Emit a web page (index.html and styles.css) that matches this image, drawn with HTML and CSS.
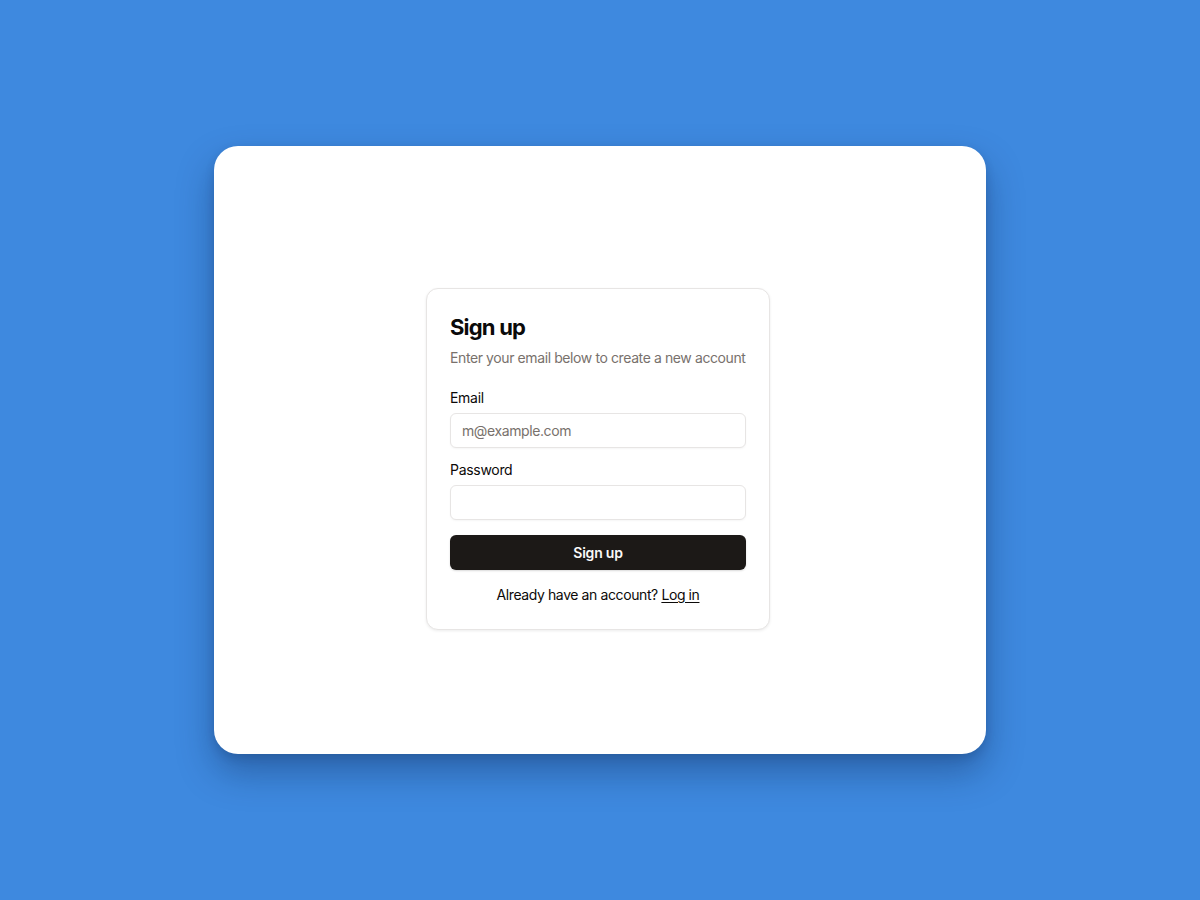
FILE: index.html
```html
<!DOCTYPE html>
<html lang="en">
<head>
<meta charset="utf-8">
<title>Sign up</title>
<link rel="stylesheet" href="styles.css">
</head>
<body>
<div class="stage">
  <div class="window">
    <form class="card">
      <h1 class="title">Sign up</h1>
      <p class="subtitle">Enter your email below to create a new account</p>
      <label class="label" for="email">Email</label>
      <input class="input" id="email" type="email" placeholder="m@example.com">
      <label class="label label-gap" for="password">Password</label>
      <input class="input" id="password" type="password">
      <button class="button" type="button">Sign up</button>
      <p class="footer">Already have an account? <a href="#" class="link">Log in</a></p>
    </form>
  </div>
</div>
</body>
</html>
```

FILE: styles.css
```css
* { box-sizing: border-box; }
html, body { margin: 0; padding: 0; }
body {
  background: #3e89df;
  font-family: Inter, "Noto Sans", "Liberation Sans", sans-serif;
  color: #0c0a09;
}
.stage {
  width: 1200px;
  height: 900px;
  display: flex;
  align-items: center;
  justify-content: center;
}
.window {
  width: 772px;
  height: 608px;
  background: #ffffff;
  border-radius: 24px;
  box-shadow: 0 18px 36px rgba(10, 30, 70, 0.35), 0 4px 10px rgba(10, 30, 70, 0.15);
  display: flex;
  align-items: center;
  justify-content: center;
  padding: 18px 4px 0 0;
}
.card {
  width: 344px;
  padding: 24px 23px;
  border: 1px solid #e7e5e4;
  border-radius: 12px;
  background: #ffffff;
  box-shadow: 0 1px 3px rgba(0, 0, 0, 0.08);
  display: flex;
  flex-direction: column;
  margin: 0;
}
.title {
  margin: 0;
  font-size: 22px;
  line-height: 28px;
  font-weight: 700;
  letter-spacing: -0.8px;
  color: #0a0a0a;
}
.subtitle {
  margin: 7px 0 0;
  font-size: 14px;
  line-height: 20px;
  letter-spacing: -0.4px;
  color: #78716c;
  white-space: nowrap;
}
.label {
  margin-top: 20px;
  font-size: 14px;
  line-height: 20px;
  font-weight: 400;
  letter-spacing: -0.3px;
  color: #0c0a09;
}
.label-gap { margin-top: 12px; }
.input {
  margin-top: 5px;
  height: 35px;
  width: 100%;
  border: 1px solid #e7e5e4;
  border-radius: 6px;
  padding: 0 11px;
  font-family: inherit;
  font-size: 14px;
  letter-spacing: -0.4px;
  color: #0c0a09;
  background: #fff;
  box-shadow: 0 1px 2px rgba(0, 0, 0, 0.04);
  outline: none;
}
.input::placeholder { color: #78716c; }
.button {
  margin-top: 15px;
  height: 35px;
  width: 100%;
  border: none;
  border-radius: 6px;
  background: #1c1917;
  color: #fafaf9;
  font-family: inherit;
  font-size: 14px;
  font-weight: 600;
  letter-spacing: -0.2px;
  box-shadow: 0 1px 2px rgba(0, 0, 0, 0.15);
}
.footer {
  margin: 15px 0 0;
  text-align: center;
  font-size: 14px;
  line-height: 20px;
  letter-spacing: -0.4px;
  color: #0c0a09;
}
.link {
  color: #0c0a09;
  text-decoration: underline;
  text-underline-offset: 2px;
}
```
